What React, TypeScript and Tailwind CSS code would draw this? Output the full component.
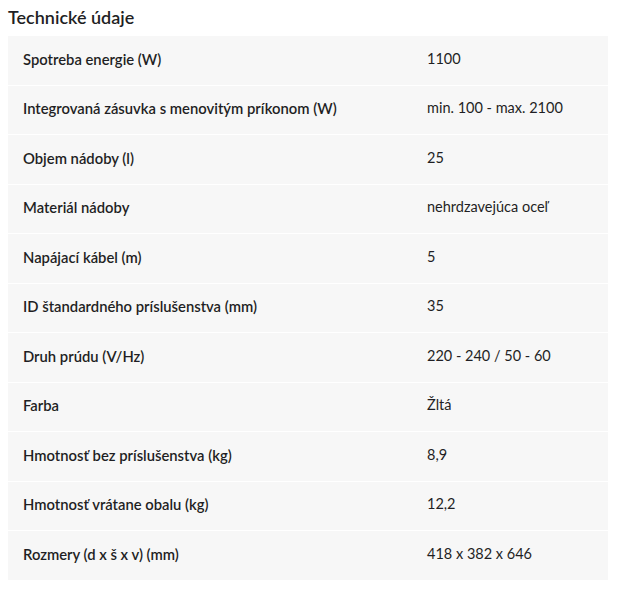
import React from 'react';

const specs: [string, string][] = [
  ['Spotreba energie (W)', '1100'],
  ['Integrovaná zásuvka s menovitým príkonom (W)', 'min. 100 - max. 2100'],
  ['Objem nádoby (l)', '25'],
  ['Materiál nádoby', 'nehrdzavejúca oceľ'],
  ['Napájací kábel (m)', '5'],
  ['ID štandardného príslušenstva (mm)', '35'],
  ['Druh prúdu (V/Hz)', '220 - 240 / 50 - 60'],
  ['Farba', 'Žltá'],
  ['Hmotnosť bez príslušenstva (kg)', '8,9'],
  ['Hmotnosť vrátane obalu (kg)', '12,2'],
  ['Rozmery (d x š x v) (mm)', '418 x 382 x 646'],
];

export default function App() {
  return (
    <div className="w-[618px] h-[594px] bg-white px-2 pt-[5px] text-[#1f1f24] font-['Lato','Liberation_Sans',sans-serif]">
      <h2 className="text-[18px] leading-[24px] font-semibold mb-[7px]">Technické údaje</h2>
      <div className="w-[600px] bg-[#f7f7f7]">
        {specs.map(([label, value], i) => (
          <div
            key={label}
            className={`flex items-center pb-[3px] ${i > 0 ? 'h-[49.5px] border-t border-white' : 'h-[48.5px]'}`}
          >
            <div className="w-[404px] pl-[15px] text-[14.8px] font-semibold">{label}</div>
            <div className="flex-1 pl-[15px] text-[14.5px]">{value}</div>
          </div>
        ))}
      </div>
    </div>
  );
}
